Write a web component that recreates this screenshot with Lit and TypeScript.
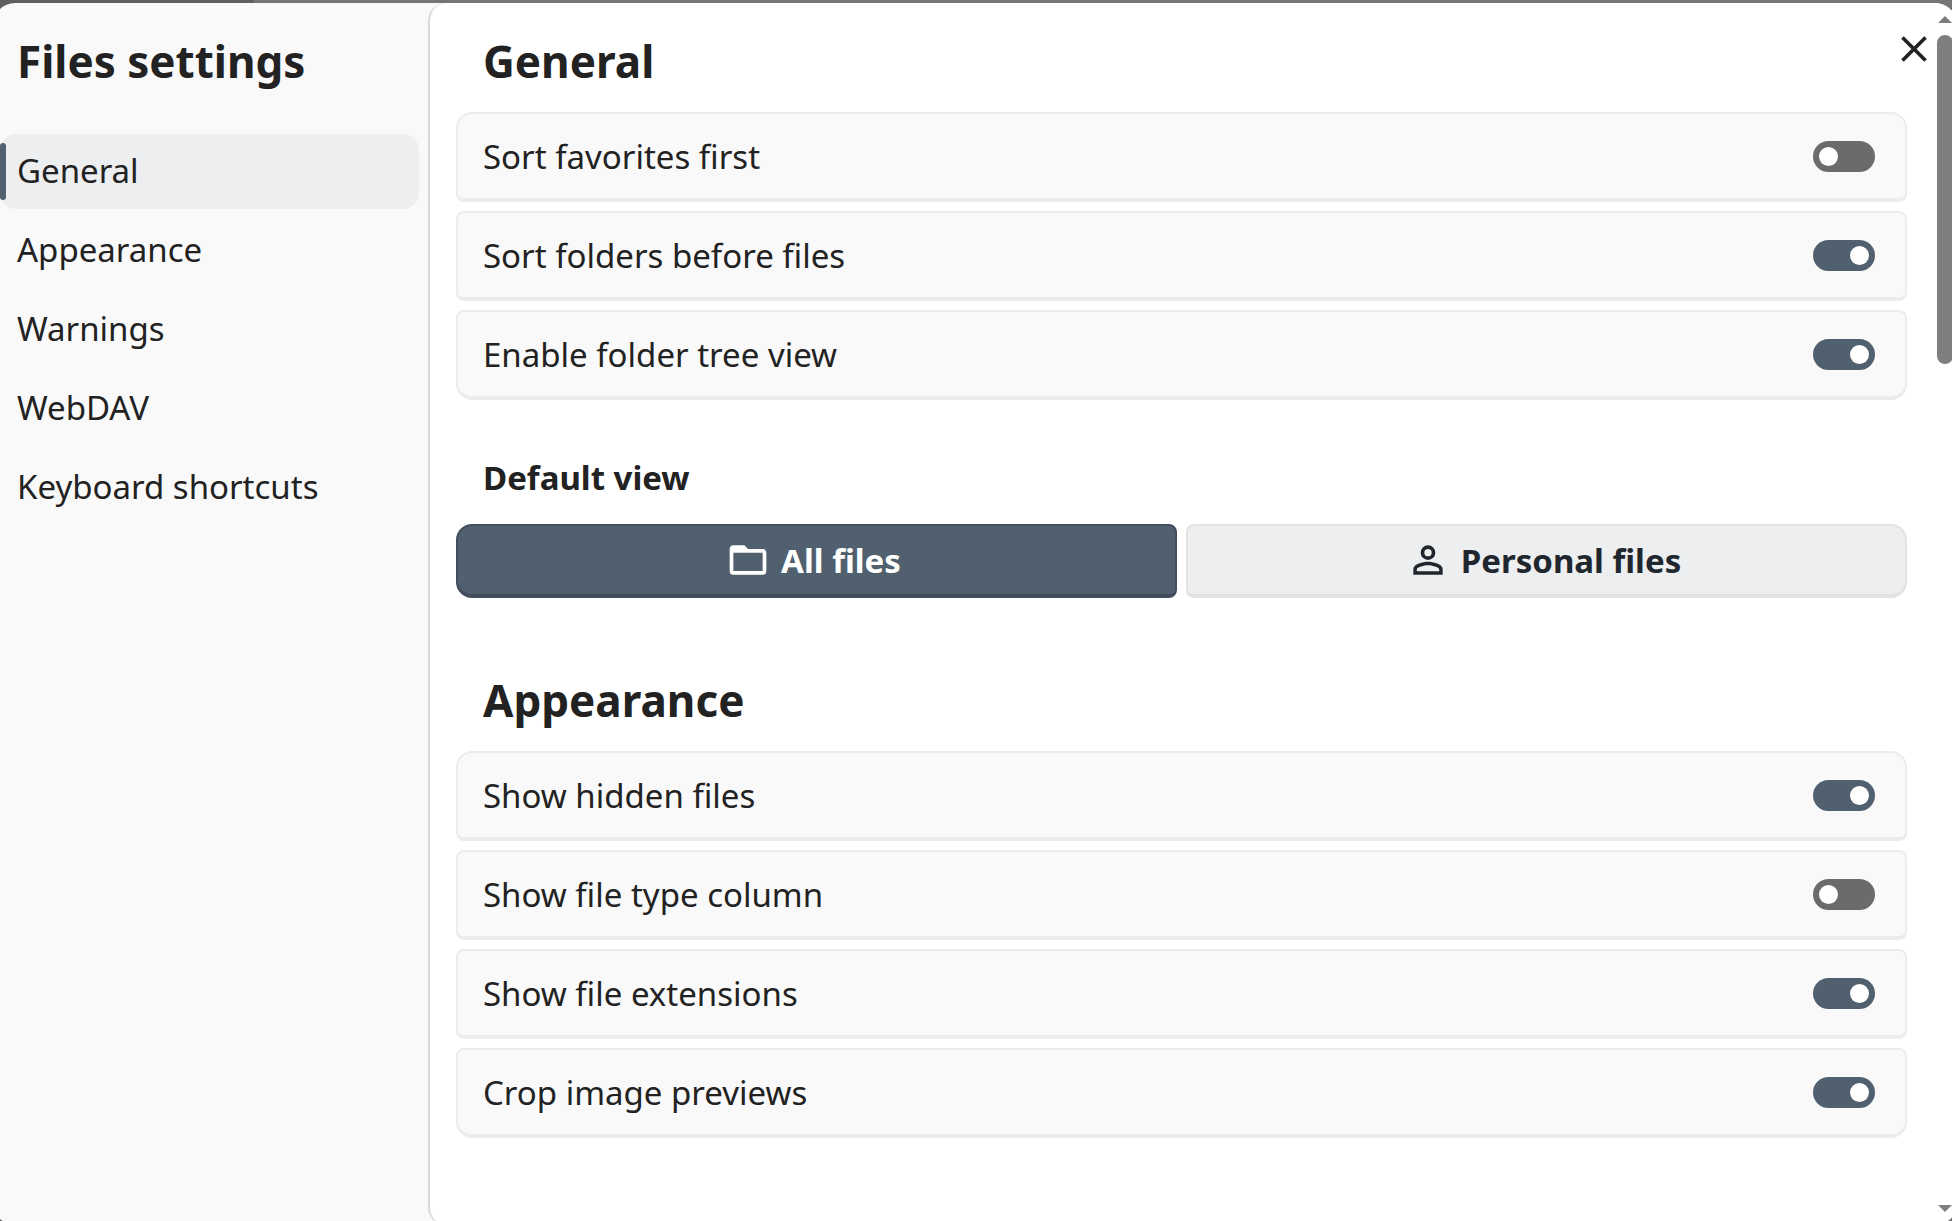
import { LitElement, html, css, svg } from "lit";
import { customElement, property, state } from "lit/decorators.js";
import { classMap } from "lit/directives/class-map.js";

const ICONS = {
  close:
    "M19,6.41L17.59,5L12,10.59L6.41,5L5,6.41L10.59,12L5,17.59L6.41,19L12,13.41L17.59,19L19,17.59L13.41,12L19,6.41Z",
  folder:
    "M20,18H4V8H20M20,6H12L10,4H4C2.89,4 2,4.89 2,6V18A2,2 0 0,0 4,20H20A2,2 0 0,0 22,18V8C22,6.89 21.1,6 20,6Z",
  account:
    "M12,4A4,4 0 0,1 16,8A4,4 0 0,1 12,12A4,4 0 0,1 8,8A4,4 0 0,1 12,4M12,6A2,2 0 0,0 10,8A2,2 0 0,0 12,10A2,2 0 0,0 14,8A2,2 0 0,0 12,6M12,13C14.67,13 20,14.33 20,17V20H4V17C4,14.33 9.33,13 12,13M12,14.9C9.03,14.9 5.9,16.36 5.9,17V18.1H18.1V17C18.1,16.36 14.97,14.9 12,14.9Z",
};

type IconName = keyof typeof ICONS;

@customElement("app-icon")
export class AppIcon extends LitElement {
  @property() name: IconName = "close";

  static styles = css`
    :host {
      display: block;
      flex: none;
    }
    .icon {
      display: block;
      width: 44px;
      height: 44px;
      fill: currentColor;
    }
  `;

  render() {
    return html`<svg class="icon" viewBox="0 0 24 24" aria-hidden="true">
      ${svg`<path d=${ICONS[this.name]}></path>`}
    </svg>`;
  }
}

@customElement("switch-row")
export class SwitchRow extends LitElement {
  @property() label = "";
  @property({ type: Boolean }) checked = false;

  static styles = css`
    :host {
      display: block;
      border-radius: var(--row-radius, 8px);
    }
    .row {
      display: flex;
      align-items: center;
      justify-content: space-between;
      box-sizing: border-box;
      min-height: 90px;
      padding: 0 30px 0 25px;
      border: 2px solid #ebeced;
      border-bottom-width: 4px;
      border-radius: inherit;
      background: #f9f9f9;
      cursor: pointer;
    }
    .text {
      padding-top: 2px;
    }
    .toggle {
      appearance: none;
      display: flex;
      align-items: center;
      box-sizing: border-box;
      width: 62px;
      height: 31px;
      margin: 0;
      padding: 0 6px;
      border-radius: 16px;
      background: #6b6b6b;
      cursor: pointer;
    }
    .toggle::before {
      content: "";
      width: 19px;
      height: 19px;
      border-radius: 50%;
      background: #fff;
    }
    .toggle:checked {
      justify-content: flex-end;
      background: #50606f;
    }
  `;

  render() {
    return html`<label class="row">
      <span class="text">${this.label}</span>
      <input
        class="toggle"
        type="checkbox"
        role="switch"
        .checked=${this.checked}
        @change=${(e: Event) => (this.checked = (e.target as HTMLInputElement).checked)}
      />
    </label>`;
  }
}

const SECTIONS = [
  { id: "general", label: "General" },
  { id: "appearance", label: "Appearance" },
  { id: "warnings", label: "Warnings" },
  { id: "webdav", label: "WebDAV" },
  { id: "shortcuts", label: "Keyboard shortcuts" },
];

const GENERAL = [
  { label: "Sort favorites first", on: false },
  { label: "Sort folders before files", on: true },
  { label: "Enable folder tree view", on: true },
];

const APPEARANCE = [
  { label: "Show hidden files", on: true },
  { label: "Show file type column", on: false },
  { label: "Show file extensions", on: true },
  { label: "Crop image previews", on: true },
];

const VIEWS: { id: string; label: string; icon: IconName }[] = [
  { id: "all", label: "All files", icon: "folder" },
  { id: "personal", label: "Personal files", icon: "account" },
];

@customElement("app-root")
export class AppRoot extends LitElement {
  @state() private section = "general";
  @state() private view = "all";

  static styles = css`
    :host {
      display: block;
      font-family: "Noto Sans", sans-serif;
      font-size: 33px;
      line-height: 50px;
      color: #222;
    }
    .backdrop {
      display: flex;
      box-sizing: border-box;
      height: 100vh;
      padding-top: 3px;
      overflow: hidden;
      background: linear-gradient(to right, #5f5f5f 13%, #757575 13%);
    }
    .dialog {
      flex: 1;
      display: flex;
      position: relative;
      margin: 0 -5px -4px -7px;
      border-radius: 22px;
      overflow: hidden;
      background: #f9f9f9;
    }
    .sidebar {
      flex: none;
      box-sizing: border-box;
      width: 435px;
      padding: 28px 9px 0 7px;
    }
    .title {
      margin: 0;
      font-size: 44px;
      line-height: 60px;
      font-weight: 700;
    }
    .sidebar .title {
      padding-left: 17px;
    }
    .nav {
      display: flex;
      flex-direction: column;
      gap: 4px;
      margin-top: 43px;
    }
    .link {
      display: flex;
      align-items: center;
      height: 75px;
      padding-left: 17px;
      border-radius: 16px;
      color: inherit;
      text-decoration: none;
    }
    .link-text {
      padding-bottom: 2px;
    }
    .link.active {
      background: #edeef0;
    }
    .link.active::before {
      content: "";
      width: 6px;
      height: 57px;
      margin: 0 11px 0 -17px;
      border-radius: 3px;
      background: #50606f;
    }
    .panel {
      flex: 1;
      display: flex;
      min-width: 0;
      border-left: 2px solid #d9d9d9;
      border-radius: 18px 0 0 18px;
      background: #fff;
    }
    .content {
      flex: 1;
      min-width: 0;
      padding: 28px 29px 0 26px;
      overflow: hidden;
    }
    .content .title {
      padding-left: 27px;
    }
    .rows {
      display: flex;
      flex-direction: column;
      gap: 9px;
      margin-top: 21px;
    }
    .rows switch-row:first-child {
      --row-radius: 16px 16px 8px 8px;
    }
    .rows switch-row:last-child {
      --row-radius: 8px 8px 16px 16px;
    }
    .subtitle {
      margin: 53px 0 21px;
      padding-left: 27px;
      font-size: 33px;
      line-height: 50px;
      font-weight: 700;
    }
    .views {
      display: grid;
      grid-template-columns: 1fr 1fr;
      gap: 9px;
      margin-bottom: 72px;
    }
    .view {
      display: flex;
      align-items: center;
      justify-content: center;
      gap: 11px;
      height: 74px;
      padding: 0 6px 0 0;
      border: 2px solid #e1e2e3;
      border-bottom-width: 4px;
      border-radius: 8px;
      background: #edeef0;
      color: #1f262e;
      font: inherit;
      font-weight: 700;
      cursor: pointer;
    }
    .view-text {
      padding-top: 2px;
    }
    .view:first-child {
      border-top-left-radius: 16px;
      border-bottom-left-radius: 16px;
    }
    .view:last-child {
      border-top-right-radius: 16px;
      border-bottom-right-radius: 16px;
    }
    .view.selected {
      border-color: #424e5b;
      background: #50606f;
      color: #fff;
    }
    .scrollbar {
      flex: none;
      display: flex;
      flex-direction: column;
      align-items: center;
      width: 21px;
      padding: 13px 3px 13px 0;
      box-sizing: border-box;
    }
    .arrow {
      display: block;
      width: 14px;
      height: 7px;
      fill: #7e7e7e;
    }
    .track {
      flex: 1;
      padding: 12px 0;
    }
    .thumb {
      width: 16px;
      height: 28.4%;
      border-radius: 8px;
      background: #7e7e7e;
    }
    .close {
      position: absolute;
      top: 24px;
      right: 21px;
      padding: 0;
      border: 0;
      background: none;
      color: #222;
      cursor: pointer;
    }
  `;

  private rows(items: { label: string; on: boolean }[]) {
    return html`<div class="rows">
      ${items.map((i) => html`<switch-row .label=${i.label} .checked=${i.on}></switch-row>`)}
    </div>`;
  }

  render() {
    return html`<div class="backdrop">
      <div class="dialog" role="dialog" aria-labelledby="dialog-title">
        <aside class="sidebar">
          <h1 class="title" id="dialog-title">Files settings</h1>
          <nav class="nav">
            ${SECTIONS.map(
              (s) => html`<a
                class=${classMap({ link: true, active: s.id === this.section })}
                href="#${s.id}"
                @click=${() => (this.section = s.id)}
                ><span class="link-text">${s.label}</span></a
              >`
            )}
          </nav>
        </aside>
        <div class="panel">
          <main class="content">
            <section id="general">
              <h2 class="title">General</h2>
              ${this.rows(GENERAL)}
              <h3 class="subtitle" id="view-title">Default view</h3>
              <div class="views" role="group" aria-labelledby="view-title">
                ${VIEWS.map(
                  (v) => html`<button
                    type="button"
                    class=${classMap({ view: true, selected: v.id === this.view })}
                    aria-pressed=${v.id === this.view}
                    @click=${() => (this.view = v.id)}
                  >
                    <app-icon .name=${v.icon}></app-icon><span class="view-text">${v.label}</span>
                  </button>`
                )}
              </div>
            </section>
            <section id="appearance">
              <h2 class="title">Appearance</h2>
              ${this.rows(APPEARANCE)}
            </section>
          </main>
          <div class="scrollbar" aria-hidden="true">
            <svg class="arrow" viewBox="0 0 14 7"><path d="M0 7L7 0L14 7Z"></path></svg>
            <div class="track"><div class="thumb"></div></div>
            <svg class="arrow" viewBox="0 0 14 7"><path d="M0 0H14L7 7Z"></path></svg>
          </div>
        </div>
        <button class="close" type="button" aria-label="Close">
          <app-icon name="close"></app-icon>
        </button>
      </div>
    </div>`;
  }
}
